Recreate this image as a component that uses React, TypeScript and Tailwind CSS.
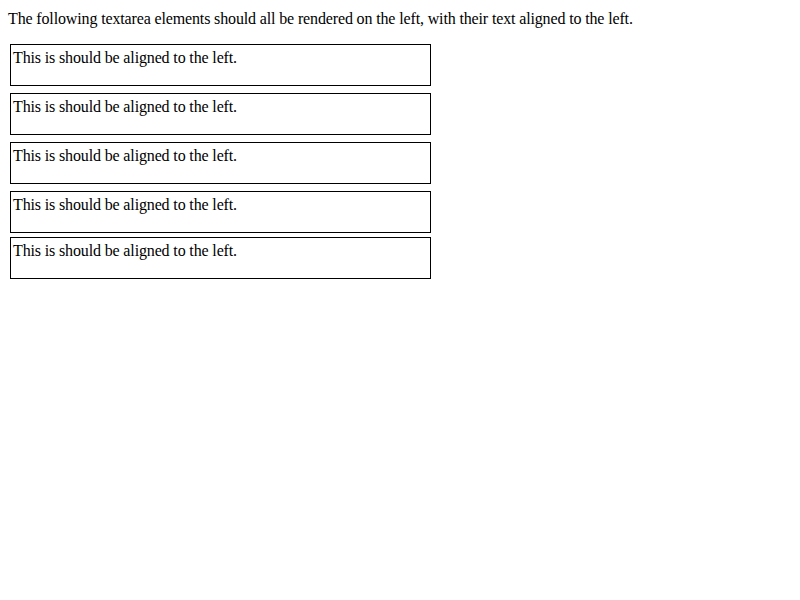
export default function App() {
  const items = [0, 1, 2, 3, 4];
  const margins = ["mt-[16px]", "mt-[7px]", "mt-[7px]", "mt-[7px]", "mt-[4px]"];
  return (
    <div className="min-h-[600px] bg-white pl-2 pt-[10px] text-black font-['Liberation_Serif',serif] text-[16px] tracking-[-0.14px]">
      <p className="leading-[18px]">
        The following textarea elements should all be rendered on the left, with their text aligned to the left.
      </p>
      <div className="flex flex-col pl-[2px]">
        {items.map((i) => (
          <textarea
            key={i}
            readOnly
            defaultValue="This is should be aligned to the left."
            className={`${margins[i]} block h-[42px] w-[421px] resize-none overflow-hidden border border-black px-[2px] pt-[4px] pb-0 text-left font-['Liberation_Serif',serif] text-[16px] leading-[18px] tracking-[-0.14px] outline-none`}
          />
        ))}
      </div>
    </div>
  );
}
